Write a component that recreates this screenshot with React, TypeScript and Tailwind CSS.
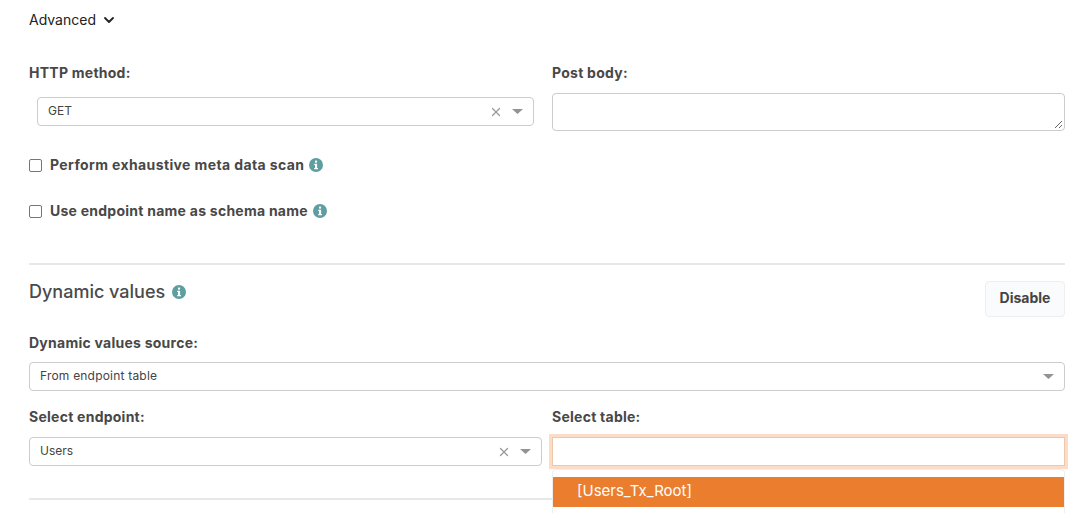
import { ChevronDown, X } from "lucide-react";

function InfoDot({ size = 14 }: { size?: number }) {
  return (
    <svg width={size} height={size} viewBox="0 0 14 14" className="shrink-0">
      <circle cx="7" cy="7" r="7" fill="#5f9ea0" />
      <rect x="6" y="2.6" width="2.1" height="2" fill="#fff" />
      <path d="M5.2 5.7H8.1V10H9V11.3H5.2V10H6V7H5.2Z" fill="#fff" />
    </svg>
  );
}

function Caret() {
  return (
    <svg width="11" height="5" viewBox="0 0 11 5" className="shrink-0">
      <path d="M0 0H11L5.5 5Z" fill="#939393" />
    </svg>
  );
}

function SelectBox({ value, clearable, className }: { value: string; clearable?: boolean; className?: string }) {
  return (
    <div className={`flex h-[29px] items-center rounded border border-[#cccccc] bg-white pl-[10px] pr-[10px] text-[12px] text-[#444] ${className ?? ""}`}>
      <span className="flex-1 pb-[1px]">{value}</span>
      {clearable && <X size={14} strokeWidth={2.2} className="mr-[9px] text-[#999]" />}
      <Caret />
    </div>
  );
}

function Label({ children }: { children: string }) {
  return <div className="text-[14px] leading-[20px] font-bold tracking-[0.25px] text-[#484848]">{children}</div>;
}

function CheckRow({ text, className }: { text: string; className?: string }) {
  return (
    <div className={`flex h-[20px] items-center ${className ?? ""}`}>
      <span className="h-[13px] w-[13px] rounded-[2px] border border-[#767676] bg-white" />
      <span className="ml-[8px] pb-[1px] text-[14px] font-bold text-[#484848]">{text}</span>
      <span className="ml-[5px]">
        <InfoDot />
      </span>
    </div>
  );
}

export default function App() {
  return (
    <div className="h-[513px] w-[1080px] overflow-hidden bg-white pl-[29px] pr-[15px] font-['Inter',sans-serif]">
      <div className="mt-[10px] flex h-[20px] items-center pb-[1px] text-[14px] text-[#222]">
        Advanced
        <ChevronDown size={16} strokeWidth={2.75} className="ml-[5px] text-[#222]" />
      </div>

      <div className="mt-[33px] flex gap-[18px]">
        <div className="w-[505px]">
          <Label>HTTP method:</Label>
          <SelectBox value="GET" clearable className="ml-[8px] mt-[14px]" />
        </div>
        <div className="flex-1">
          <Label>Post body:</Label>
          <div className="relative mt-[10px] h-[38px] rounded border border-[#cccccc] bg-white">
            <svg width="9" height="9" viewBox="0 0 9 9" className="absolute bottom-[1px] right-[1px]">
              <path d="M1 8L8 1M5 8L8 5" stroke="#666" strokeWidth="1" />
            </svg>
          </div>
        </div>
      </div>

      <CheckRow text="Perform exhaustive meta data scan" className="mt-[24px] tracking-[0.38px]" />
      <CheckRow text="Use endpoint name as schema name" className="mt-[26px] tracking-[0.25px]" />

      <div className="mt-[42px] h-[2px] bg-[#e8e8e8]" />

      <div className="mt-[16px] flex items-start justify-between">
        <div className="mt-[-1px] flex items-center text-[18px] leading-[24px] font-medium text-[#4a4a4a]">
          Dynamic values
          <span className="ml-[7px]">
            <InfoDot />
          </span>
        </div>
        <div className="flex h-[36px] w-[80px] items-center justify-center rounded border border-[#eceef0] bg-[#fafbfc] pb-[3px] text-[14px] font-bold text-[#444]">
          Disable
        </div>
      </div>

      <div className="mt-[16px]">
        <Label>Dynamic values source:</Label>
        <SelectBox value="From endpoint table" className="mt-[9px] tracking-[0.2px]" />
      </div>

      <div className="mt-[16px] flex gap-[10px]">
        <div className="w-[513px]">
          <Label>Select endpoint:</Label>
          <SelectBox value="Users" clearable className="mt-[10px]" />
        </div>
        <div className="relative flex-1">
          <Label>Select table:</Label>
          <div className="mt-[10px] h-[29px] border border-[#efc8a8] bg-white shadow-[0_0_0_3px_#fbdcc8]" />
          <div className="absolute left-0 right-0 top-[62px] z-10 h-[60px] rounded-t border border-[#eeeeee] bg-white pt-[7px]">
            <div className="flex h-[30px] items-center bg-[#eb7d2e] pb-[1px] pl-[24px] text-[15px] text-[#fff]">[Users_Tx_Root]</div>
          </div>
        </div>
      </div>

      <div className="mt-[32px] h-[2px] bg-[#e8e8e8]" />
    </div>
  );
}
